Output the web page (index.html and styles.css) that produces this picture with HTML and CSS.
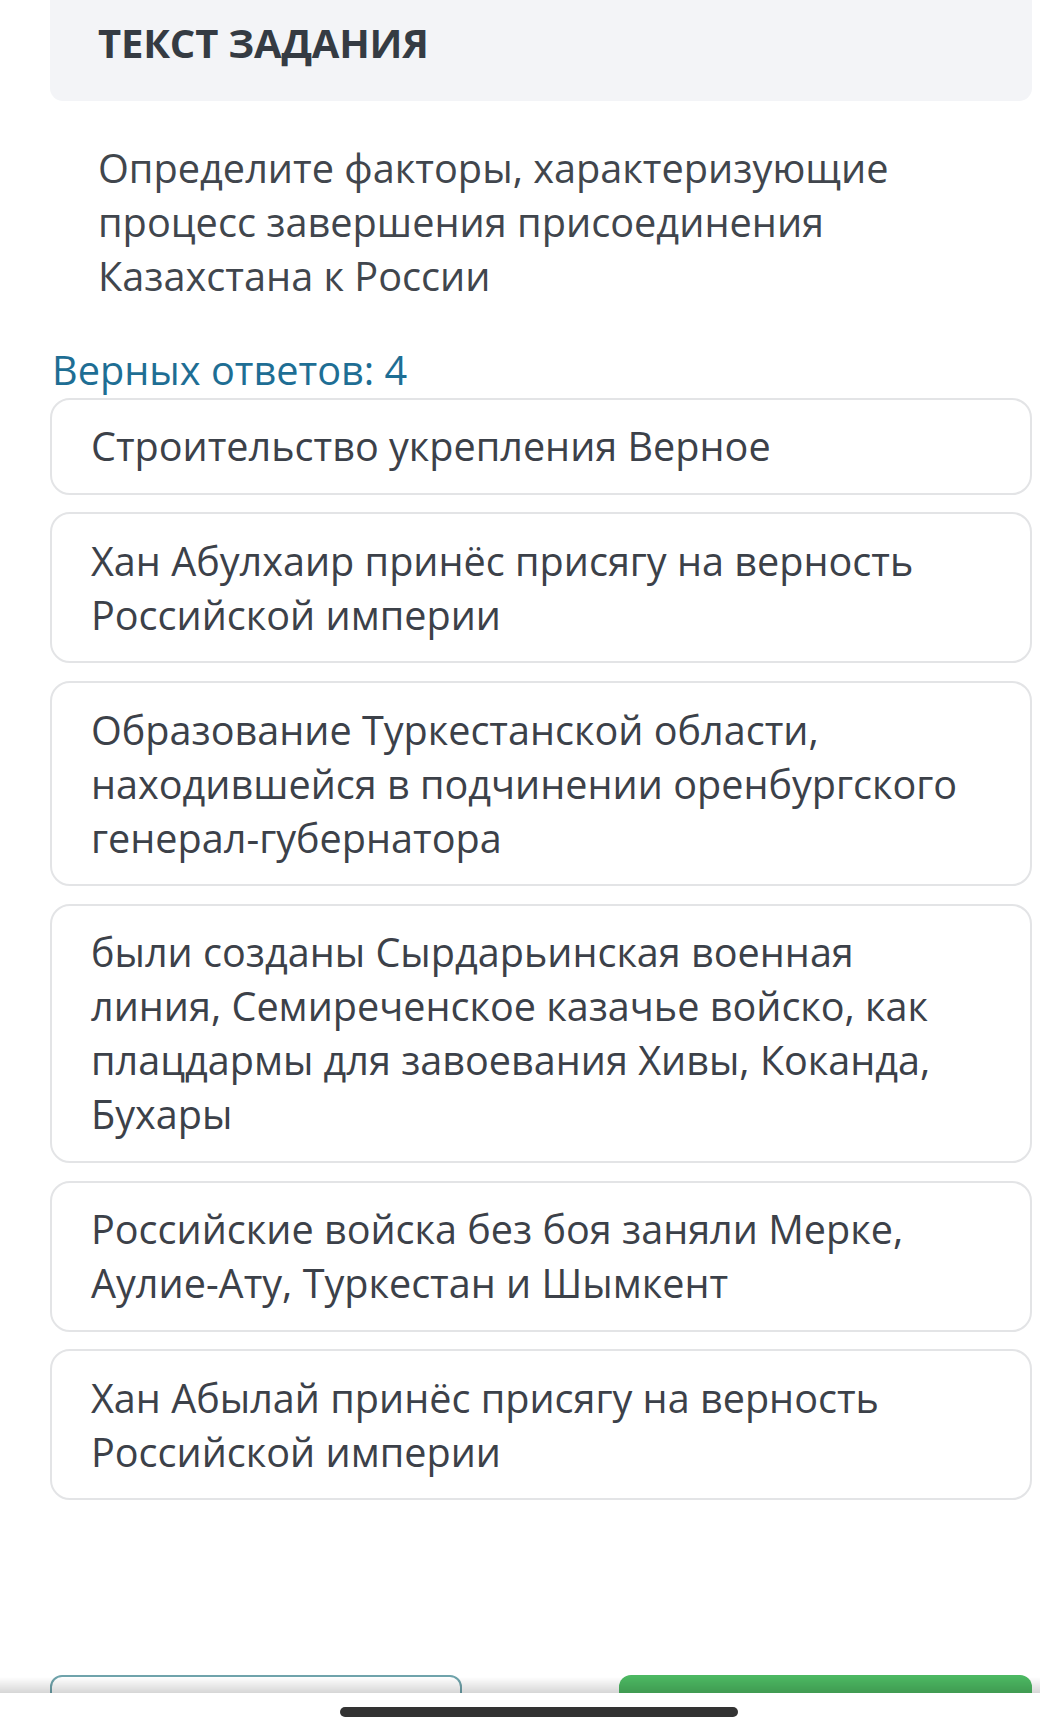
FILE: index.html
```html
<!DOCTYPE html>
<html lang="ru">
<head>
<meta charset="utf-8">
<title>Текст задания</title>
<link rel="stylesheet" href="styles.css">
</head>
<body>
<main class="page">
  <header class="task-head">
    <h1 class="task-title">ТЕКСТ ЗАДАНИЯ</h1>
  </header>
  <p class="question">Определите факторы, характеризующие<br>процесс завершения присоединения<br>Казахстана к России</p>
  <div class="count">Верных ответов: 4</div>
  <ul class="options">
    <li class="option">Строительство укрепления Верное</li>
    <li class="option">Хан Абулхаир принёс присягу на верность<br>Российской империи</li>
    <li class="option">Образование Туркестанской области,<br>находившейся в подчинении оренбургского<br>генерал-губернатора</li>
    <li class="option">были созданы Сырдарьинская военная<br>линия, Семиреченское казачье войско, как<br>плацдармы для завоевания Хивы, Коканда,<br>Бухары</li>
    <li class="option">Российские войска без боя заняли Мерке,<br>Аулие-Ату, Туркестан и Шымкент</li>
    <li class="option">Хан Абылай принёс присягу на верность<br>Российской империи</li>
  </ul>
  <div class="actions">
    <button class="btn btn-outline" type="button"></button>
    <button class="btn btn-green" type="button"></button>
  </div>
</main>
<div class="home-bar"><span class="home-indicator"></span></div>
</body>
</html>
```
FILE: styles.css
```css
html, body {
  margin: 0;
  padding: 0;
  background: #ffffff;
  height: 1734px;
  overflow: hidden;
}

body {
  font-family: "Open Sans", "Noto Sans", sans-serif;
  color: #3c4149;
}

.page {
  width: 982px;
  padding-left: 50px;
  display: flex;
  flex-direction: column;
}

.task-head {
  background: #f3f4f7;
  border-radius: 0 0 13px 13px;
  padding: 15px 48px 30px;
}

.task-title {
  margin: 0;
  font-size: 40px;
  line-height: 56px;
  font-weight: 700;
  color: #353b43;
  letter-spacing: -0.2px;
}

.question {
  margin: 39.5px 0 0;
  padding-left: 48px;
  font-size: 39.7px;
  line-height: 54px;
  color: #41464d;
  white-space: nowrap;
}

.count {
  margin-top: 40px;
  font-size: 39.7px;
  line-height: 54px;
  color: #1e6e94;
  padding-left: 2px;
}

.options {
  list-style: none;
  margin: 1px 0 0;
  padding: 0;
  display: flex;
  flex-direction: column;
  gap: 17.8px;
}

.option {
  border: 2px solid #e3e4e6;
  border-radius: 20px;
  padding: 19.5px 30px 19.5px 39px;
  font-size: 39.6px;
  line-height: 54px;
  color: #3c4149;
  white-space: nowrap;
}

.actions {
  margin-top: 175px;
  display: flex;
  justify-content: space-between;
}

.btn {
  height: 60px;
  border-radius: 12px;
  padding: 0;
  font: inherit;
}

.btn-outline {
  width: 412px;
  background: #ffffff;
  border: 2px solid #6fa3ab;
}

.btn-green {
  width: 413px;
  background: #4cb862;
  border: none;
}

.home-bar {
  position: fixed;
  left: 0;
  right: 0;
  bottom: 0;
  height: 41px;
  background: #ffffff;
}

.home-bar::before {
  content: "";
  position: absolute;
  left: 0;
  right: 0;
  top: -16px;
  height: 16px;
  background: linear-gradient(rgba(0, 0, 0, 0), rgba(0, 0, 0, 0.16));
}

.home-indicator {
  position: absolute;
  left: 340px;
  top: 14px;
  width: 398px;
  height: 10px;
  border-radius: 5px;
  background: #333333;
}
```
